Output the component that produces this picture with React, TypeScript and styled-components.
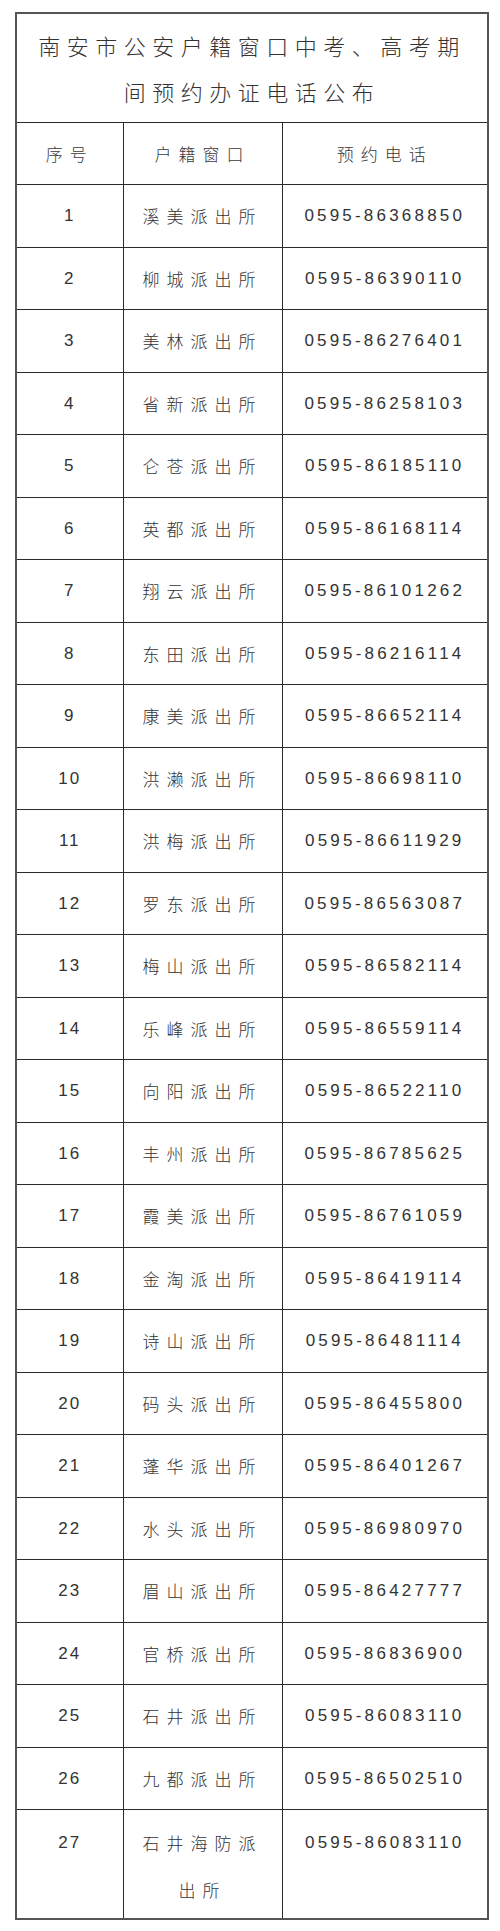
import styled, { createGlobalStyle } from 'styled-components';

const GlobalStyle = createGlobalStyle`
  html, body {
    margin: 0;
    padding: 0;
    background: #ffffff;
  }
  body {
    width: 500px;
    font-family: "Liberation Sans", "Noto Sans CJK SC", sans-serif;
    color: #333333;
  }
`;

const rows: [string, string, string][] = [
  ['1', '溪美派出所', '0595-86368850'],
  ['2', '柳城派出所', '0595-86390110'],
  ['3', '美林派出所', '0595-86276401'],
  ['4', '省新派出所', '0595-86258103'],
  ['5', '仑苍派出所', '0595-86185110'],
  ['6', '英都派出所', '0595-86168114'],
  ['7', '翔云派出所', '0595-86101262'],
  ['8', '东田派出所', '0595-86216114'],
  ['9', '康美派出所', '0595-86652114'],
  ['10', '洪濑派出所', '0595-86698110'],
  ['11', '洪梅派出所', '0595-86611929'],
  ['12', '罗东派出所', '0595-86563087'],
  ['13', '梅山派出所', '0595-86582114'],
  ['14', '乐峰派出所', '0595-86559114'],
  ['15', '向阳派出所', '0595-86522110'],
  ['16', '丰州派出所', '0595-86785625'],
  ['17', '霞美派出所', '0595-86761059'],
  ['18', '金淘派出所', '0595-86419114'],
  ['19', '诗山派出所', '0595-86481114'],
  ['20', '码头派出所', '0595-86455800'],
  ['21', '蓬华派出所', '0595-86401267'],
  ['22', '水头派出所', '0595-86980970'],
  ['23', '眉山派出所', '0595-86427777'],
  ['24', '官桥派出所', '0595-86836900'],
  ['25', '石井派出所', '0595-86083110'],
  ['26', '九都派出所', '0595-86502510'],
  ['27', '石井海防派出所', '0595-86083110'],
];

function App() {
  return (
    <>
      <GlobalStyle />
      <Page>
        <Table>
          <colgroup>
            <col style={{ width: '107px' }} />
            <col style={{ width: '159px' }} />
            <col style={{ width: '206px' }} />
          </colgroup>
          <thead>
            <tr>
              <TitleCell colSpan={3}>南安市公安户籍窗口中考、高考期间预约办证电话公布</TitleCell>
            </tr>
            <HeadRow>
              <HeadCell>序号</HeadCell>
              <HeadCell>户籍窗口</HeadCell>
              <HeadCell>预约电话</HeadCell>
            </HeadRow>
          </thead>
          <tbody>
            {rows.map(([no, name, phone]) => {
              const tall = name.length > 5;
              return (
                <BodyRow key={no} $tall={tall}>
                  <NumCell $tall={tall}>{no}</NumCell>
                  <NameCell $tall={tall}>{name}</NameCell>
                  <PhoneCell $tall={tall}>{phone}</PhoneCell>
                </BodyRow>
              );
            })}
          </tbody>
        </Table>
      </Page>
    </>
  );
}

const Page = styled.div`
  padding: 12px 12px 14px 15px;
`;

const Table = styled.table`
  width: 473px;
  table-layout: fixed;
  border-collapse: collapse;
  border: 2px solid #555555;

  td, th {
    border: 1.5px solid #2a2a2a;
    padding: 0;
    text-align: center;
    font-weight: 400;
  }
`;

const TitleCell = styled.th`
  height: 108px;
  padding: 0 18px !important;
  font-family: "Noto Sans CJK SC", sans-serif;
  font-weight: 300 !important;
  font-size: 22px;
  letter-spacing: 6.5px;
  line-height: 46px;
  color: #333333;
`;

const HeadRow = styled.tr`
  height: 62px;
`;

const HeadCell = styled.th`
  font-family: "Noto Sans CJK SC", sans-serif;
  font-weight: 300 !important;
  font-size: 17px;
  letter-spacing: 7px;
  color: #3a3a3a;
`;

const BodyRow = styled.tr<{ $tall: boolean }>`
  height: ${(p) => (p.$tall ? '109px' : '62.5px')};
`;

const BaseCell = styled.td<{ $tall: boolean }>`
  vertical-align: ${(p) => (p.$tall ? 'top' : 'middle')};
  padding-top: ${(p) => (p.$tall ? '9px' : '0')} !important;
  line-height: 47px;
  color: #333333;
`;

const NumCell = styled(BaseCell)`
  font-family: "Liberation Sans", sans-serif;
  font-size: 17px;
  letter-spacing: 2px;
`;

const NameCell = styled(BaseCell)`
  padding-left: 14px !important;
  padding-right: 14px !important;
  font-family: "Noto Sans CJK SC", sans-serif;
  font-weight: 300 !important;
  font-size: 17px;
  letter-spacing: 7px;
`;

const PhoneCell = styled(BaseCell)`
  font-family: "Liberation Sans", sans-serif;
  font-size: 17px;
  letter-spacing: 3.2px;
`;

export default App;
